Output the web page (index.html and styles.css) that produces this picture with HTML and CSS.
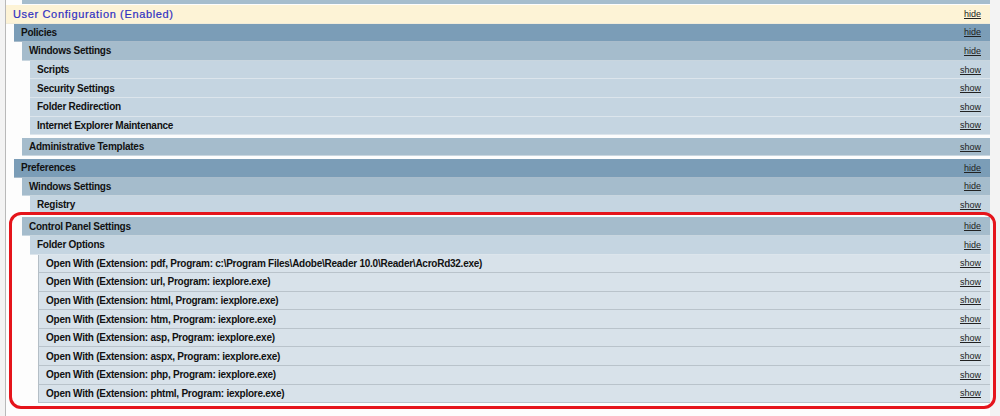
FILE: index.html
```html
<!DOCTYPE html>
<html lang="en">
<head>
    <meta charset="UTF-8">
    <title>Group Policy Report</title>
    <link rel="stylesheet" href="styles.css">
</head>
<body>
    <div class="frame">
        <div class="pane">
            <div class="stub"></div>

            <div class="sec">
                <div class="row cfg"><span class="title">User Configuration (Enabled)</span><a href="#" class="toggle">hide</a></div>
                <div class="kids">

                    <div class="sec">
                        <div class="row lv1"><span>Policies</span><a href="#" class="toggle">hide</a></div>
                        <div class="kids">
                            <div class="sec">
                                <div class="row lv2"><span>Windows Settings</span><a href="#" class="toggle">hide</a></div>
                                <div class="kids">
                                    <div class="row lv3"><span>Scripts</span><a href="#" class="toggle">show</a></div>
                                    <div class="row lv3"><span>Security Settings</span><a href="#" class="toggle">show</a></div>
                                    <div class="row lv3"><span>Folder Redirection</span><a href="#" class="toggle">show</a></div>
                                    <div class="row lv3"><span>Internet Explorer Maintenance</span><a href="#" class="toggle">show</a></div>
                                </div>
                            </div>
                            <div class="row lv2"><span>Administrative Templates</span><a href="#" class="toggle">show</a></div>
                        </div>
                    </div>

                    <div class="sec">
                        <div class="row lv1"><span>Preferences</span><a href="#" class="toggle">hide</a></div>
                        <div class="kids">
                            <div class="sec">
                                <div class="row lv2"><span>Windows Settings</span><a href="#" class="toggle">hide</a></div>
                                <div class="kids">
                                    <div class="row lv3"><span>Registry</span><a href="#" class="toggle">show</a></div>
                                </div>
                            </div>
                            <div class="sec">
                                <div class="row lv2"><span>Control Panel Settings</span><a href="#" class="toggle">hide</a></div>
                                <div class="kids">
                                    <div class="row lv3"><span>Folder Options</span><a href="#" class="toggle">hide</a></div>
                                    <div class="kids">
                                        <div class="row lv4"><span>Open With (Extension: pdf, Program: c:\Program Files\Adobe\Reader 10.0\Reader\AcroRd32.exe)</span><a href="#" class="toggle">show</a></div>
                                        <div class="row lv4"><span>Open With (Extension: url, Program: iexplore.exe)</span><a href="#" class="toggle">show</a></div>
                                        <div class="row lv4"><span>Open With (Extension: html, Program: iexplore.exe)</span><a href="#" class="toggle">show</a></div>
                                        <div class="row lv4"><span>Open With (Extension: htm, Program: iexplore.exe)</span><a href="#" class="toggle">show</a></div>
                                        <div class="row lv4"><span>Open With (Extension: asp, Program: iexplore.exe)</span><a href="#" class="toggle">show</a></div>
                                        <div class="row lv4"><span>Open With (Extension: aspx, Program: iexplore.exe)</span><a href="#" class="toggle">show</a></div>
                                        <div class="row lv4"><span>Open With (Extension: php, Program: iexplore.exe)</span><a href="#" class="toggle">show</a></div>
                                        <div class="row lv4"><span>Open With (Extension: phtml, Program: iexplore.exe)</span><a href="#" class="toggle">show</a></div>
                                    </div>
                                </div>
                            </div>
                        </div>
                    </div>

                </div>
            </div>
        </div>

        <!-- highlight round the control panel block -->
        <div class="mark"></div>
    </div>
</body>
</html>
```

FILE: styles.css
```css
body {
    margin: 0;
    background-color: #f3f3f3;
    font-family: "Liberation Sans", Arial, sans-serif;
    color: #111;
}

.frame {
    position: relative;
    height: 416px;
    padding-left: 5px;
}

.pane {
    width: 984px;
    height: 416px;
    background-color: #fdfdfd;
    border-left: 1px solid #b9b9b9;
}

.stub {
    height: 4px;
    margin-left: 16px;
    margin-bottom: 1px;
    background-color: #a6bdcd;
}

.sec {
    margin-bottom: 2.6px;
}
.kids {
    margin-left: 8px;
}

.row {
    display: flex;
    align-items: center;
    justify-content: space-between;
    box-sizing: border-box;
    height: 18.6px;
    padding: 0 9px 0 7px;
    border-bottom: 1px solid #e4ebf0;
    font-size: 10px;
    font-weight: bold;
    letter-spacing: -0.25px;
}

.cfg {
    background-color: #fdf3d6;
    border-bottom-color: #f2ecd8;
}
.cfg .title {
    color: #2f2fc2;
    font-size: 11px;
    font-weight: normal;
    letter-spacing: 0.65px;
    -webkit-text-stroke: 0.2px #2f2fc2;
}

.lv1 {
    background-color: #7b9db7;
    border-bottom-color: #a9bccb;
}
.lv2 {
    background-color: #a5bccc;
    border-bottom-color: #c9d6df;
}
.lv3 {
    background-color: #c5d5e1;
    border-bottom-color: #dce5ec;
}
.lv4 {
    background-color: #d8e2ea;
    border-left: 1px solid #b4bec6;
    border-bottom-color: #b9c3cb;
    padding-left: 7px;
}

.toggle {
    color: #222;
    font-size: 9px;
    font-weight: normal;
    letter-spacing: 0;
    text-decoration: underline;
}

.mark {
    position: absolute;
    left: 9px;
    top: 212px;
    width: 987px;
    height: 197px;
    box-sizing: border-box;
    border: 3px solid #e5141b;
    border-radius: 12px;
}
```
